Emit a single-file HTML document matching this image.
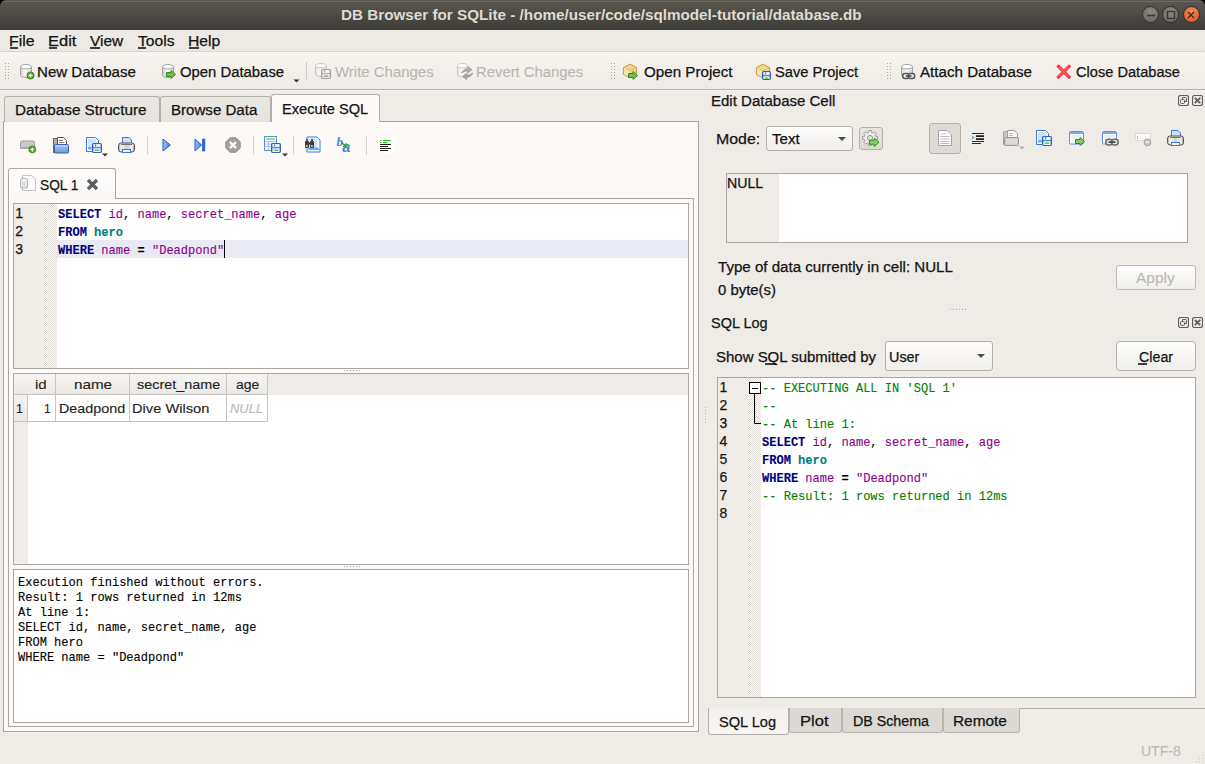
<!DOCTYPE html>
<html><head><meta charset="utf-8"><style>
html,body{margin:0;padding:0}
body{width:1205px;height:764px;overflow:hidden;position:relative;background:#efebe7;font-family:'Liberation Sans',sans-serif}
body>div,body>svg{position:absolute}
.t{white-space:pre;transform-origin:0 0;-webkit-text-stroke:0.25px currentColor}
.m{-webkit-text-stroke:0.2px currentColor}
u{text-decoration:underline;text-decoration-thickness:1.4px;text-underline-offset:1.5px}
</style></head><body>
<div style="left:0px;top:0px;width:1205px;height:12px;background:#000"></div><div style="left:0px;top:0px;width:1205px;height:30px;background:linear-gradient(#5b5850,#3d3c38);border-radius:6px 6px 0 0"></div><div style="left:3px;top:1px;width:1199px;height:1px;background:#6f6c63"></div><div style="left:1142.3px;top:6px;width:15px;height:15px;border-radius:50%;border:1px solid #2f2e2a;background:radial-gradient(circle at 50% 30%,#8b8982,#66645e)"></div><div style="left:1162.3px;top:6px;width:15px;height:15px;border-radius:50%;border:1px solid #2f2e2a;background:radial-gradient(circle at 50% 30%,#8b8982,#66645e)"></div><div style="left:1182.5px;top:6px;width:15px;height:15px;border-radius:50%;border:1px solid #2f2e2a;background:radial-gradient(circle at 50% 30%,#f58a5b,#e2511d)"></div><svg style="left:1143px;top:7px" width="16" height="16"><path d="M4 8.5h8" stroke="#3a3935" stroke-width="1.6"/></svg><svg style="left:1163px;top:7px" width="16" height="16"><rect x="4.5" y="4.5" width="7" height="7" fill="none" stroke="#3a3935" stroke-width="1.4"/></svg><svg style="left:1183px;top:7px" width="16" height="16"><path d="M5 5l6 6M11 5l-6 6" stroke="#3a2a1a" stroke-width="1.4"/></svg><div style="left:0px;top:30px;width:1205px;height:21px;background:#edeae6"></div><div style="left:0px;top:51px;width:1205px;height:1px;background:#d9d5d0"></div><div style="left:0px;top:52px;width:1205px;height:37px;background:linear-gradient(#f8f5f1,#eeebe6)"></div><div style="left:0px;top:89px;width:1205px;height:1px;background:#b6b3ae"></div><div style="left:0px;top:90px;width:1205px;height:1px;background:#f4f2ef"></div><div style="left:3px;top:121px;width:696px;height:611px;background:#fcf9f6;border:1px solid #a9a6a1;box-sizing:border-box"></div><div style="left:4px;top:96px;width:156px;height:26px;background:linear-gradient(#ebe8e4,#e6e3df);border:1px solid #b3b0ab;border-bottom:none;border-radius:3px 3px 0 0;box-sizing:border-box"></div><div style="left:160px;top:96px;width:111px;height:26px;background:linear-gradient(#ebe8e4,#e6e3df);border:1px solid #b3b0ab;border-bottom:none;border-radius:3px 3px 0 0;box-sizing:border-box"></div><div style="left:271px;top:94px;width:109px;height:28px;background:#fcf9f6;border:1px solid #b3b0ab;border-bottom:none;border-radius:3px 3px 0 0;box-sizing:border-box"></div><div style="left:8px;top:198px;width:686px;height:529px;border:1px solid #a9a6a1;box-sizing:border-box"></div><div style="left:8px;top:168px;width:108px;height:31px;background:linear-gradient(#fefefd,#faf8f6);border:1px solid #aaa7a2;border-bottom:none;border-radius:3px 3px 0 0;box-sizing:border-box"></div><div style="left:13px;top:203px;width:676px;height:166px;background:#fff;border:1px solid #a9a6a1;box-sizing:border-box"></div><div style="left:14px;top:204px;width:29px;height:164px;background:#efebe7"></div><div style="left:43px;top:204px;width:14px;height:164px;background-color:#fff;background-image:repeating-conic-gradient(#dedbd7 0 25%,#fff 0 50%);background-size:2px 2px"></div><div style="left:57px;top:240px;width:631px;height:18px;background:#e9e9f3"></div><div style="left:224px;top:240px;width:1px;height:18px;background:#000"></div><div style="left:13px;top:373px;width:676px;height:192px;background:#fff;border:1px solid #a9a6a1;box-sizing:border-box"></div><div style="left:14px;top:374px;width:674px;height:21px;background:#efebe7"></div><div style="left:14px;top:395px;width:14px;height:169px;background:#efebe7"></div><div style="left:14px;top:374px;width:254px;height:21px;background:linear-gradient(#f7f5f3,#ebe8e4)"></div><div style="left:14px;top:394px;width:254px;height:1px;background:#c6c3be"></div><div style="left:14px;top:421px;width:254px;height:1px;background:#c6c3be"></div><div style="left:55px;top:374px;width:1px;height:48px;background:#c9c6c1"></div><div style="left:129px;top:374px;width:1px;height:48px;background:#c9c6c1"></div><div style="left:226px;top:374px;width:1px;height:48px;background:#c9c6c1"></div><div style="left:267px;top:374px;width:1px;height:48px;background:#c9c6c1"></div><div style="left:27px;top:395px;width:1px;height:27px;background:#c9c6c1"></div><div style="left:14px;top:395px;width:13px;height:26px;background:linear-gradient(#f4f2ef,#ebe8e4)"></div><div style="left:13px;top:569px;width:676px;height:154px;background:#fff;border:1px solid #a9a6a1;box-sizing:border-box"></div><div style="left:344px;top:370px;width:18px;height:1px;background-image:repeating-linear-gradient(90deg,#a9a6a1 0 1px,transparent 1px 3px)"></div><div style="left:344px;top:566px;width:18px;height:1px;background-image:repeating-linear-gradient(90deg,#a9a6a1 0 1px,transparent 1px 3px)"></div><div style="left:766px;top:126px;width:87px;height:25px;background:linear-gradient(#fdfcfb,#f1efec);border:1px solid #b3b0ab;border-radius:3px;box-sizing:border-box"></div><svg style="left:836px;top:135px" width="12" height="8"><path d="M2 2h8l-4 4z" fill="#4a4a4a"/></svg><div style="left:859px;top:127px;width:24px;height:23px;background:linear-gradient(#e9e6e2,#dcd9d5);border:1px solid #b3b0ab;border-radius:3px;box-sizing:border-box"></div><div style="left:929px;top:123px;width:32px;height:31px;background:#dedad6;border:1px solid #b3b0ab;border-radius:3px;box-sizing:border-box"></div><div style="left:726px;top:173px;width:462px;height:70px;background:#fff;border:1px solid #a9a6a1;box-sizing:border-box"></div><div style="left:727px;top:174px;width:52px;height:68px;background:#efebe7"></div><div style="left:1116px;top:265px;width:80px;height:25px;background:linear-gradient(#fefefe,#f1efec);border:1px solid #bcb9b4;border-radius:3px;box-sizing:border-box"></div><div style="left:950px;top:309px;width:18px;height:1px;background-image:repeating-linear-gradient(90deg,#a9a6a1 0 1px,transparent 1px 3px)"></div><div style="left:951px;top:310px;width:18px;height:1px;background-image:repeating-linear-gradient(90deg,#fbfaf8 0 1px,transparent 1px 3px)"></div><div style="left:885px;top:341px;width:108px;height:30px;background:linear-gradient(#fdfcfb,#f1efec);border:1px solid #b3b0ab;border-radius:3px;box-sizing:border-box"></div><svg style="left:975px;top:352px" width="12" height="8"><path d="M2 2h8l-4 4z" fill="#4a4a4a"/></svg><div style="left:1116px;top:341px;width:80px;height:30px;background:linear-gradient(#fefefe,#f0eeeb);border:1px solid #b3b0ab;border-radius:4px;box-sizing:border-box"></div><div style="left:717px;top:377px;width:479px;height:321px;background:#fff;border:1px solid #a9a6a1;box-sizing:border-box"></div><div style="left:718px;top:378px;width:29px;height:319px;background:#efebe7"></div><div style="left:747px;top:378px;width:14px;height:319px;background-color:#fff;background-image:repeating-conic-gradient(#dedbd7 0 25%,#fff 0 50%);background-size:2px 2px"></div><svg style="left:748px;top:381px" width="14" height="46"><rect x="1.5" y="1.5" width="11" height="11" fill="#fff" stroke="#000"/><path d="M4 7.5h6" stroke="#000"/><path d="M6.5 13V42.5H13" fill="none" stroke="#000"/></svg><div style="left:788px;top:708px;width:417px;height:1px;background:#b3b0ab"></div><div style="left:708px;top:708px;width:81px;height:27px;background:linear-gradient(#f3f1ee,#f7f5f2);border:1px solid #b3b0ab;border-top:none;border-radius:0 0 3px 3px;box-sizing:border-box"></div><div style="left:789px;top:708px;width:53px;height:25px;background:#dcd9d5;border:1px solid #b8b5b0;border-top:none;border-radius:0 0 3px 3px;box-sizing:border-box"></div><div style="left:842px;top:708px;width:101px;height:25px;background:#dcd9d5;border:1px solid #b8b5b0;border-top:none;border-radius:0 0 3px 3px;box-sizing:border-box"></div><div style="left:943px;top:708px;width:77px;height:25px;background:#dcd9d5;border:1px solid #b8b5b0;border-top:none;border-radius:0 0 3px 3px;box-sizing:border-box"></div>
<svg style="left:5px;top:63px" width="5" height="18" viewBox="0 0 5 18"><rect x="0" y="0" width="1" height="1" fill="#aaa59f"/><rect x="0" y="3" width="1" height="1" fill="#aaa59f"/><rect x="0" y="6" width="1" height="1" fill="#aaa59f"/><rect x="0" y="9" width="1" height="1" fill="#aaa59f"/><rect x="0" y="12" width="1" height="1" fill="#aaa59f"/><rect x="0" y="15" width="1" height="1" fill="#aaa59f"/><rect x="3" y="0" width="1" height="1" fill="#aaa59f"/><rect x="3" y="3" width="1" height="1" fill="#aaa59f"/><rect x="3" y="6" width="1" height="1" fill="#aaa59f"/><rect x="3" y="9" width="1" height="1" fill="#aaa59f"/><rect x="3" y="12" width="1" height="1" fill="#aaa59f"/><rect x="3" y="15" width="1" height="1" fill="#aaa59f"/></svg><svg style="left:611px;top:63px" width="5" height="18" viewBox="0 0 5 18"><rect x="0" y="0" width="1" height="1" fill="#aaa59f"/><rect x="0" y="3" width="1" height="1" fill="#aaa59f"/><rect x="0" y="6" width="1" height="1" fill="#aaa59f"/><rect x="0" y="9" width="1" height="1" fill="#aaa59f"/><rect x="0" y="12" width="1" height="1" fill="#aaa59f"/><rect x="0" y="15" width="1" height="1" fill="#aaa59f"/><rect x="3" y="0" width="1" height="1" fill="#aaa59f"/><rect x="3" y="3" width="1" height="1" fill="#aaa59f"/><rect x="3" y="6" width="1" height="1" fill="#aaa59f"/><rect x="3" y="9" width="1" height="1" fill="#aaa59f"/><rect x="3" y="12" width="1" height="1" fill="#aaa59f"/><rect x="3" y="15" width="1" height="1" fill="#aaa59f"/></svg><svg style="left:887px;top:63px" width="5" height="18" viewBox="0 0 5 18"><rect x="0" y="0" width="1" height="1" fill="#aaa59f"/><rect x="0" y="3" width="1" height="1" fill="#aaa59f"/><rect x="0" y="6" width="1" height="1" fill="#aaa59f"/><rect x="0" y="9" width="1" height="1" fill="#aaa59f"/><rect x="0" y="12" width="1" height="1" fill="#aaa59f"/><rect x="0" y="15" width="1" height="1" fill="#aaa59f"/><rect x="3" y="0" width="1" height="1" fill="#aaa59f"/><rect x="3" y="3" width="1" height="1" fill="#aaa59f"/><rect x="3" y="6" width="1" height="1" fill="#aaa59f"/><rect x="3" y="9" width="1" height="1" fill="#aaa59f"/><rect x="3" y="12" width="1" height="1" fill="#aaa59f"/><rect x="3" y="15" width="1" height="1" fill="#aaa59f"/></svg><div style="left:306px;top:62px;width:1px;height:19px;background:#cfcbc6"></div><svg style="left:19px;top:63px" width="18" height="18" viewBox="0 0 18 18"><defs><linearGradient id="g1" x1="0" x2="1"><stop offset="0" stop-color="#d2d2d2"/><stop offset=".45" stop-color="#fbfbfb"/><stop offset="1" stop-color="#d2d2d2"/></linearGradient></defs><path d="M1.5 3.7V12.3A5.5 2.2 0 0 0 12.5 12.3V3.7" fill="url(#g1)" stroke="#a6a6a6"/><ellipse cx="7.0" cy="3.7" rx="5.5" ry="2.2" fill="#ffffff" stroke="#a6a6a6"/><circle cx="11.5" cy="12.5" r="3.6" fill="#4f9e2a" stroke="#2f7a12" stroke-width=".8"/><path d="M9.5 12.5h4M11.5 10.5v4" stroke="#fff" stroke-width="1.4"/></svg><svg style="left:161px;top:63px" width="18" height="18" viewBox="0 0 18 18"><defs><linearGradient id="g2" x1="0" x2="1"><stop offset="0" stop-color="#d2d2d2"/><stop offset=".45" stop-color="#fbfbfb"/><stop offset="1" stop-color="#d2d2d2"/></linearGradient></defs><path d="M1.5 3.7V12.3A5.5 2.2 0 0 0 12.5 12.3V3.7" fill="url(#g2)" stroke="#a6a6a6"/><ellipse cx="7.0" cy="3.7" rx="5.5" ry="2.2" fill="#ffffff" stroke="#a6a6a6"/><path d="M5.5 9.5H10.0V7.5L14.5 11.5L10.0 15.5V13.5H5.5Z" fill="#6cbf4a" stroke="#2e8b1e" stroke-linejoin="round"/></svg><svg style="left:292px;top:79px" width="8" height="5" viewBox="0 0 8 5"><path d="M1.5 0.5h6l-3 3z" fill="#333"/></svg><svg style="left:314px;top:63px" width="18" height="18" viewBox="0 0 18 18"><defs><linearGradient id="g3" x1="0" x2="1"><stop offset="0" stop-color="#e6e5e3"/><stop offset=".45" stop-color="#fafaf9"/><stop offset="1" stop-color="#e6e5e3"/></linearGradient></defs><path d="M1.5 2.7V11.3A5.5 2.2 0 0 0 12.5 11.3V2.7" fill="url(#g3)" stroke="#c9c7c4"/><ellipse cx="7.0" cy="2.7" rx="5.5" ry="2.2" fill="#ffffff" stroke="#c9c7c4"/><rect x="7.5" y="6.5" width="9" height="9" rx="0.8" fill="#b9b8b6" stroke="#9d9b98"/><rect x="8.5" y="7.2" width="7" height="2.6" fill="#fbfbfa"/><rect x="10" y="7.6" width="1.2" height="1.6" fill="#9d9b98"/><rect x="8.5" y="11.3" width="7" height="3.7" fill="#fbfbfa"/><rect x="9.6" y="12.4" width="4.8" height="1.6" fill="#a5a3a0"/></svg><svg style="left:456px;top:63px" width="18" height="18" viewBox="0 0 18 18"><defs><linearGradient id="g4" x1="0" x2="1"><stop offset="0" stop-color="#e6e5e3"/><stop offset=".45" stop-color="#fafaf9"/><stop offset="1" stop-color="#e6e5e3"/></linearGradient></defs><path d="M1.5 2.7V11.3A5.0 2.2 0 0 0 11.5 11.3V2.7" fill="url(#g4)" stroke="#c9c7c4"/><ellipse cx="6.5" cy="2.7" rx="5.0" ry="2.2" fill="#ffffff" stroke="#c9c7c4"/><path d="M5.5 10Q7.5 5.8 12 5.8V3.8L16 6.8L12 9.8V7.8Q9 7.8 5.5 10Z" fill="#b3b1ae" stroke="#9a9895" stroke-width=".7" stroke-linejoin="round"/><path d="M17 10Q14.5 14.5 10.5 14.5V16.5L6.5 13.5L10.5 10.5V12.5Q13.5 12.5 17 10Z" fill="#a9a7a4" stroke="#8f8d8a" stroke-width=".7" stroke-linejoin="round"/></svg><svg style="left:622px;top:63px" width="18" height="18" viewBox="0 0 18 18"><path d="M8 1.2L14.6 4.5V11.5L8 14.8L1.4 11.5V4.5Z" fill="#f4d58c" stroke="#c99a3c"/><path d="M1.8 4.7L8 8L14.2 4.7M8 8V14.5" fill="none" stroke="#d8b060" stroke-width=".8"/><path d="M2 5L8 8.2V14.2L2 11.2Z" fill="#f8e4b0"/><path d="M6.5 10.5H11.0V8.5L15.5 12.5L11.0 16.5V14.5H6.5Z" fill="#6cbf4a" stroke="#2e8b1e" stroke-linejoin="round"/></svg><svg style="left:755px;top:63px" width="18" height="18" viewBox="0 0 18 18"><path d="M8 1.2L14.6 4.5V11.5L8 14.8L1.4 11.5V4.5Z" fill="#f4d58c" stroke="#c99a3c"/><path d="M1.8 4.7L8 8L14.2 4.7M8 8V14.5" fill="none" stroke="#d8b060" stroke-width=".8"/><path d="M2 5L8 8.2V14.2L2 11.2Z" fill="#f8e4b0"/><rect x="7.5" y="8.5" width="8" height="8" rx="0.8" fill="#4f86d6" stroke="#2f63b8"/><rect x="8.5" y="9.2" width="6" height="2.6" fill="#ffffff"/><rect x="10" y="9.6" width="1.2" height="1.6" fill="#2f63b8"/><rect x="8.5" y="13.3" width="6" height="2.7" fill="#ffffff"/><rect x="9.6" y="14.4" width="3.8" height="1.6" fill="#7cc43a"/></svg><svg style="left:900px;top:63px" width="18" height="18" viewBox="0 0 18 18"><defs><linearGradient id="g5" x1="0" x2="1"><stop offset="0" stop-color="#d2d2d2"/><stop offset=".45" stop-color="#fbfbfb"/><stop offset="1" stop-color="#d2d2d2"/></linearGradient></defs><path d="M1.5 3.7V12.3A5.5 2.2 0 0 0 12.5 12.3V3.7" fill="url(#g5)" stroke="#a6a6a6"/><ellipse cx="7.0" cy="3.7" rx="5.5" ry="2.2" fill="#ffffff" stroke="#a6a6a6"/><rect x="2.8" y="10.5" width="6.4" height="5" rx="2.2" fill="#e9ecee" stroke="#555" stroke-width="1.5"/><rect x="8.3" y="10.5" width="6.4" height="5" rx="2.2" fill="#e9ecee" stroke="#555" stroke-width="1.5"/><path d="M6 13h5.5" stroke="#444" stroke-width="1.6"/></svg><svg style="left:1055px;top:63px" width="18" height="18" viewBox="0 0 18 18"><path d="M3.5 3.5L14 14M14 3.5L3.5 14" stroke="#ef3a47" stroke-width="3.2" stroke-linecap="square"/><path d="M4 4L13.5 13.5M13.5 4L4 13.5" stroke="#fb6a73" stroke-width="1"/></svg><svg style="left:19px;top:136px" width="20" height="20" viewBox="0 0 20 20"><rect x="1.5" y="5" width="14" height="7" rx="1.5" fill="#c9c9c9" stroke="#9c9c9c"/><rect x="1" y="11.5" width="15" height="1.5" fill="#a8a8a8"/><circle cx="13.3" cy="13.4" r="3.4" fill="#4f9e2a" stroke="#2f7a12" stroke-width=".8"/><path d="M11.3 13.4h4M13.3 11.4v4" stroke="#fff" stroke-width="1.4"/></svg><svg style="left:52px;top:137px" width="18" height="18" viewBox="0 0 18 18"><defs><linearGradient id="g6" x1="0" y1="0" x2="0" y2="1"><stop offset="0" stop-color="#a9c6ec"/><stop offset="1" stop-color="#6f9ad6"/></linearGradient></defs><rect x="1.5" y="1.5" width="4" height="14" fill="#b0b0b0" stroke="#666"/><path d="M5.5 0.5H11.5L14.5 3.5V9H5.5Z" fill="#fafafa" stroke="#555"/><path d="M7 3.5h4M7 5.5h5" stroke="#8a8a8a"/><rect x="2.5" y="7.5" width="14" height="8.5" rx="1" fill="url(#g6)" stroke="#2f62b1"/><rect x="3.5" y="8.5" width="12" height="1" fill="#c6dbf5"/></svg><svg style="left:86px;top:137px" width="20" height="20" viewBox="0 0 20 20"><path d="M0.5 0.5H9.5L12.5 3.5V14.5H0.5Z" fill="#fbfdff" stroke="#3f7bd6"/><rect x="2" y="2" width="8" height="9" fill="#cfe2fb"/><rect x="2" y="10" width="9" height="2.5" fill="#69b1f2"/><rect x="6.5" y="6.5" width="9" height="9" rx="0.8" fill="#4f86d6" stroke="#2f63b8"/><rect x="7.5" y="7.2" width="7" height="2.6" fill="#ffffff"/><rect x="9" y="7.6" width="1.2" height="1.6" fill="#2f63b8"/><rect x="7.5" y="11.3" width="7" height="3.7" fill="#ffffff"/><rect x="8.6" y="12.4" width="4.8" height="1.6" fill="#7cc43a"/></svg><svg style="left:101px;top:153px" width="8" height="5" viewBox="0 0 8 5"><path d="M1 0.5h6l-3 3z" fill="#333"/></svg><svg style="left:118px;top:137px" width="18" height="18" viewBox="0 0 18 18"><defs><linearGradient id="g7" x1="0" x2="1"><stop offset="0" stop-color="#9a9a9a"/><stop offset=".15" stop-color="#f4f4f4"/><stop offset=".5" stop-color="#cfcfcf"/><stop offset=".85" stop-color="#f4f4f4"/><stop offset="1" stop-color="#8a8a8a"/></linearGradient></defs><path d="M4.5 0.5H11L13.5 3V8H4.5Z" fill="#cfe2fb" stroke="#3b78d4"/><rect x="0.5" y="6" width="16" height="9" rx="2.5" fill="url(#g7)" stroke="#555"/><path d="M3 7.5h11" stroke="#777" stroke-width="1"/><rect x="4.5" y="12.5" width="8" height="3" fill="#eef4fc" stroke="#3b78d4"/></svg><div style="left:147px;top:136px;width:1px;height:19px;background:#d4d0cb"></div><div style="left:253px;top:136px;width:1px;height:19px;background:#d4d0cb"></div><div style="left:293px;top:136px;width:1px;height:19px;background:#d4d0cb"></div><div style="left:366px;top:136px;width:1px;height:19px;background:#d4d0cb"></div><svg style="left:162px;top:138px" width="10" height="14" viewBox="0 0 10 14"><defs><linearGradient id="g8" x1="0" x2="1"><stop offset="0" stop-color="#9cc3f2"/><stop offset="1" stop-color="#3d7ee0"/></linearGradient></defs><path d="M1 1L8.3 7L1 13Z" fill="url(#g8)" stroke="#1f5dc4" stroke-width="1" stroke-linejoin="round"/></svg><svg style="left:194px;top:138px" width="13" height="14" viewBox="0 0 13 14"><defs><linearGradient id="g9" x1="0" x2="1"><stop offset="0" stop-color="#9cc3f2"/><stop offset="1" stop-color="#3d7ee0"/></linearGradient></defs><path d="M1 1L7.6 7L1 13Z" fill="url(#g9)" stroke="#1f5dc4" stroke-linejoin="round"/><rect x="8.3" y="1" width="2.6" height="12" fill="#2a66cc" stroke="#1f5dc4" stroke-width=".6"/></svg><svg style="left:225px;top:137px" width="16" height="16" viewBox="0 0 16 16"><path d="M5 0.8H11L15.2 5V11L11 15.2H5L0.8 11V5Z" fill="#a3a3a3" stroke="#8a8a8a"/><path d="M5 5L11 11M11 5L5 11" stroke="#fff" stroke-width="2.2"/></svg><svg style="left:264px;top:136px" width="22" height="22" viewBox="0 0 22 22"><rect x="0.5" y="0.5" width="12" height="14" fill="#f3f7fd" stroke="#5b8fd6"/><path d="M2 3h9" stroke="#6cc04a" stroke-width="1.2"/><path d="M1 5.5h11M1 8h11M1 10.5h11M4.5 5v9M8 5v9" stroke="#9db9e3" stroke-width=".8"/><rect x="7.5" y="7.5" width="9" height="9" rx="0.8" fill="#4f86d6" stroke="#2f63b8"/><rect x="8.5" y="8.2" width="7" height="2.6" fill="#ffffff"/><rect x="10" y="8.6" width="1.2" height="1.6" fill="#2f63b8"/><rect x="8.5" y="12.3" width="7" height="3.7" fill="#ffffff"/><rect x="9.6" y="13.4" width="4.8" height="1.6" fill="#7cc43a"/></svg><svg style="left:281px;top:153px" width="8" height="5" viewBox="0 0 8 5"><path d="M1 0.5h6l-3 3z" fill="#333"/></svg><svg style="left:304px;top:136px" width="18" height="18" viewBox="0 0 18 18"><path d="M3.0 1.0H13.0L16.0 4.0V16.0H3.0Z" fill="#fbfdff" stroke="#3f7bd6"/><rect x="4.5" y="2.5" width="9" height="10" fill="#cfe2fb"/><rect x="4.5" y="11.5" width="10" height="2.5" fill="#69b1f2"/><rect x="5" y="12.5" width="10" height="1.6" fill="#6aa9ef"/><rect x="1" y="5" width="4" height="7" rx="1" fill="#3a3a3a"/><rect x="6" y="5" width="4" height="7" rx="1" fill="#3a3a3a"/><rect x="4" y="6.5" width="3" height="2" fill="#3a3a3a"/><rect x="2" y="3" width="2" height="2.5" fill="#555"/><rect x="7" y="3" width="2" height="2.5" fill="#555"/><rect x="1.8" y="9" width="2" height="2" fill="#bbb"/><rect x="6.8" y="9" width="2" height="2" fill="#bbb"/></svg><svg style="left:335px;top:135px" width="22" height="20" viewBox="0 0 22 20"><text x="1.5" y="10.5" font-family="Liberation Serif" font-style="italic" font-weight="bold" font-size="13" fill="#3f86e6">b</text><text x="7.2" y="17.3" font-family="Liberation Sans" font-style="italic" font-weight="bold" font-size="14.5" fill="#3f86e6">a</text><path d="M6.5 7.5L10.5 11" stroke="#3a9a2a" stroke-width="1.5"/><path d="M8 11.5H11.2V8.3" fill="none" stroke="#3a9a2a" stroke-width="1.3"/></svg><svg style="left:378px;top:137px" width="16" height="16" viewBox="0 0 16 16"><rect x="0" y="0" width="16" height="16" fill="#fff"/><path d="M2 3.5h1.5M5 3.5h8M2 5.5h1.5M5 5.5h4" stroke="#1fc21f" stroke-width="1"/><path d="M2 7.5h11M2 9.5h8M2 11.5h11M2 13.5h8" stroke="#1a1a1a" stroke-width="1"/></svg><svg style="left:19px;top:174px" width="18" height="18" viewBox="0 0 18 18"><path d="M3.5 1.5H13L16.5 5V16.5H3.5Z" fill="#fbfbfb" stroke="#c4c4c4"/><rect x="1.5" y="4.5" width="7" height="9.5" rx="2" fill="#f0f0f0" stroke="#b5b5b5" stroke-width="1.1"/><path d="M3.8 7.5v5M5.8 7.5v5" stroke="#cdcdcd"/></svg><svg style="left:85px;top:177px" width="15" height="15" viewBox="0 0 15 15"><path d="M3 3L12 12M12 3L3 12" stroke="#5c5c5c" stroke-width="3.2"/></svg><svg style="left:862px;top:130px" width="20" height="18" viewBox="0 0 20 18"><path d="M13.35 6.35L15.49 6.71L15.49 9.29L13.35 9.65L12.95 10.61L14.21 12.39L12.39 14.21L10.61 12.95L9.65 13.35L9.29 15.49L6.71 15.49L6.35 13.35L5.39 12.95L3.61 14.21L1.79 12.39L3.05 10.61L2.65 9.65L0.51 9.29L0.51 6.71L2.65 6.35L3.05 5.39L1.79 3.61L3.61 1.79L5.39 3.05L6.35 2.65L6.71 0.51L9.29 0.51L9.65 2.65L10.61 3.05L12.39 1.79L14.21 3.61L12.95 5.39Z" fill="#eeeeee" stroke="#9b9b9b" stroke-width="1"/><circle cx="8" cy="8" r="2.6" fill="#dcdcdc" stroke="#9a9a9a" stroke-width="1"/><path d="M7.5 10.25H12.25V8.0L17.0 12.25L12.25 16.5V14.25H7.5Z" fill="#86d068" stroke="#2f8f1f" stroke-linejoin="round"/></svg><svg style="left:937px;top:129px" width="16" height="18" viewBox="0 0 16 18"><path d="M1.5 1.5H10L14.5 6V16.5H1.5Z" fill="#fff" stroke="#a3a3a3"/><path d="M3.5 5h5M3.5 7.5h9M3.5 10h9M3.5 12.5h9M3.5 14.5h9" stroke="#b5b5b5" stroke-width=".9"/></svg><svg style="left:970px;top:131px" width="16" height="16" viewBox="0 0 16 16"><path d="M2 2.5h12M2 10.5h12M2 12.5h9" stroke="#2a2a2a" stroke-width="1"/><path d="M6 5.2h8M6 8.2h8" stroke="#1e1e1e" stroke-width="1.7"/><path d="M1 4.3L5 6.6L1 8.9L2.3 6.6Z" fill="#6aa6f2"/></svg><svg style="left:1002px;top:129px" width="18" height="18" viewBox="0 0 18 18"><rect x="1.5" y="2.5" width="4" height="13.5" rx="1" fill="#c9c8c6" stroke="#a09e9b"/><path d="M5.5 1.5H12.5L15.5 4.5V9H5.5Z" fill="#f6f6f5" stroke="#a09e9b"/><path d="M7 4.5h4M7 6.5h4" stroke="#c4c3c1"/><rect x="2.5" y="8.5" width="14" height="8" rx="1" fill="#cfcecc" stroke="#9c9a97"/><rect x="4" y="10" width="11" height="5" fill="#dddcda"/></svg><svg style="left:1018px;top:146px" width="8" height="5" viewBox="0 0 8 5"><path d="M1 0.5h6l-3 3z" fill="#b4b1ac"/></svg><svg style="left:1036px;top:130px" width="20" height="20" viewBox="0 0 20 20"><path d="M0.5 0.5H9.5L12.5 3.5V14.5H0.5Z" fill="#fbfdff" stroke="#3f7bd6"/><rect x="2" y="2" width="8" height="9" fill="#cfe2fb"/><rect x="2" y="10" width="9" height="2.5" fill="#69b1f2"/><rect x="6.5" y="6.5" width="9" height="9" rx="0.8" fill="#4f86d6" stroke="#2f63b8"/><rect x="7.5" y="7.2" width="7" height="2.6" fill="#ffffff"/><rect x="9" y="7.6" width="1.2" height="1.6" fill="#2f63b8"/><rect x="7.5" y="11.3" width="7" height="3.7" fill="#ffffff"/><rect x="8.6" y="12.4" width="4.8" height="1.6" fill="#7cc43a"/></svg><svg style="left:1069px;top:131px" width="18" height="17" viewBox="0 0 18 17"><defs><linearGradient id="g10" x1="0" y1="0" x2="0" y2="1"><stop offset="0" stop-color="#e6ebf3"/><stop offset="1" stop-color="#fafbfd"/></linearGradient></defs><rect x="0.5" y="0.5" width="14" height="12.5" rx="1.2" fill="#fff" stroke="#5d90da"/><rect x="1" y="1" width="13" height="2" fill="#7ea9e6"/><rect x="2" y="4" width="11" height="7.5" fill="url(#g10)"/><path d="M6.5 8.5H11.0V6.5L15.5 10.5L11.0 14.5V12.5H6.5Z" fill="#8acb6e" stroke="#2b8a1c" stroke-linejoin="round"/></svg><svg style="left:1102px;top:131px" width="18" height="17" viewBox="0 0 18 17"><defs><linearGradient id="g10" x1="0" y1="0" x2="0" y2="1"><stop offset="0" stop-color="#e6ebf3"/><stop offset="1" stop-color="#fafbfd"/></linearGradient></defs><rect x="0.5" y="0.5" width="14" height="12.5" rx="1.2" fill="#fff" stroke="#5d90da"/><rect x="1" y="1" width="13" height="2" fill="#7ea9e6"/><rect x="2" y="4" width="11" height="7.5" fill="url(#g10)"/><rect x="3.8" y="8.3" width="6.6" height="5.6" rx="2.6" fill="#e3e6ea" stroke="#6b6b6b" stroke-width="1.5"/><rect x="9.6" y="8.3" width="6.6" height="5.6" rx="2.6" fill="#e3e6ea" stroke="#6b6b6b" stroke-width="1.5"/><path d="M6.5 11.1h7" stroke="#333" stroke-width="1.5"/></svg><svg style="left:1134px;top:131px" width="20" height="18" viewBox="0 0 20 18"><rect x="1.5" y="2.5" width="15" height="7" fill="#fcfaf7" stroke="#dcdad6"/><path d="M2.5 3.5v5" stroke="#fff"/><path d="M3.5 5v3" stroke="#b9b9b9"/><circle cx="13.5" cy="11.3" r="3.4" fill="#c4c4c4" stroke="#9a9a9a" stroke-width=".9"/><path d="M11.5 11.3h4" stroke="#f2f2f2" stroke-width="1.3"/></svg><svg style="left:1167px;top:130px" width="18" height="18" viewBox="0 0 18 18"><defs><linearGradient id="g7" x1="0" x2="1"><stop offset="0" stop-color="#9a9a9a"/><stop offset=".15" stop-color="#f4f4f4"/><stop offset=".5" stop-color="#cfcfcf"/><stop offset=".85" stop-color="#f4f4f4"/><stop offset="1" stop-color="#8a8a8a"/></linearGradient></defs><path d="M4.5 0.5H11L13.5 3V8H4.5Z" fill="#cfe2fb" stroke="#3b78d4"/><rect x="0.5" y="6" width="16" height="9" rx="2.5" fill="url(#g7)" stroke="#555"/><path d="M3 7.5h11" stroke="#777" stroke-width="1"/><rect x="4.5" y="12.5" width="8" height="3" fill="#eef4fc" stroke="#3b78d4"/></svg><svg style="left:1178px;top:95px" width="11" height="11" viewBox="0 0 11 11"><rect x="0.5" y="0.5" width="10" height="10" rx="2" fill="none" stroke="#5f5e5a" stroke-width="1.2"/><rect x="2.5" y="4.5" width="4" height="4" rx="1" fill="none" stroke="#5f5e5a" stroke-width="1"/><path d="M4.5 4V2.5H7.5Q8.5 2.5 8.5 3.5V6.5H7" fill="none" stroke="#5f5e5a" stroke-width="1"/></svg><svg style="left:1192px;top:95px" width="11" height="11" viewBox="0 0 11 11"><rect x="0.5" y="0.5" width="10" height="10" rx="2" fill="none" stroke="#5f5e5a" stroke-width="1.2"/><path d="M2.8 2.8L8.2 8.2M8.2 2.8L2.8 8.2" stroke="#5f5e5a" stroke-width="1.8"/></svg><svg style="left:1178px;top:317px" width="11" height="11" viewBox="0 0 11 11"><rect x="0.5" y="0.5" width="10" height="10" rx="2" fill="none" stroke="#5f5e5a" stroke-width="1.2"/><rect x="2.5" y="4.5" width="4" height="4" rx="1" fill="none" stroke="#5f5e5a" stroke-width="1"/><path d="M4.5 4V2.5H7.5Q8.5 2.5 8.5 3.5V6.5H7" fill="none" stroke="#5f5e5a" stroke-width="1"/></svg><svg style="left:1192px;top:317px" width="11" height="11" viewBox="0 0 11 11"><rect x="0.5" y="0.5" width="10" height="10" rx="2" fill="none" stroke="#5f5e5a" stroke-width="1.2"/><path d="M2.8 2.8L8.2 8.2M8.2 2.8L2.8 8.2" stroke="#5f5e5a" stroke-width="1.8"/></svg><svg style="left:1193px;top:752px" width="12" height="12" viewBox="0 0 12 12"><rect x="9" y="3" width="1" height="1" fill="#c4c0ba"/><rect x="6" y="6" width="1" height="1" fill="#c4c0ba"/><rect x="9" y="6" width="1" height="1" fill="#c4c0ba"/><rect x="3" y="9" width="1" height="1" fill="#c4c0ba"/><rect x="6" y="9" width="1" height="1" fill="#c4c0ba"/><rect x="9" y="9" width="1" height="1" fill="#c4c0ba"/></svg><svg style="left:704px;top:407px" width="3" height="16" viewBox="0 0 3 16"><rect x="1" y="0" width="1" height="1" fill="#b5b1ab"/><rect x="1" y="3" width="1" height="1" fill="#b5b1ab"/><rect x="1" y="6" width="1" height="1" fill="#b5b1ab"/><rect x="1" y="9" width="1" height="1" fill="#b5b1ab"/><rect x="1" y="12" width="1" height="1" fill="#b5b1ab"/><rect x="1" y="15" width="1" height="1" fill="#b5b1ab"/></svg>
<div class="t" style="left:341.21px;top:8.35px;font:normal bold 14px/14px 'Liberation Sans';color:#dfdbd2;transform:scaleX(1.0883);-webkit-text-stroke:0">DB Browser for SQLite - /home/user/code/sqlmodel-tutorial/database.db</div><div class="t" style="left:9.37px;top:33.85px;font:normal normal 14px/14px 'Liberation Sans';color:#141414;transform:scaleX(1.1333);">File</div><div class="t" style="left:47.52px;top:33.85px;font:normal normal 14px/14px 'Liberation Sans';color:#141414;transform:scaleX(1.1783);">Edit</div><div class="t" style="left:90.00px;top:33.85px;font:normal normal 14px/14px 'Liberation Sans';color:#141414;transform:scaleX(1.1000);">View</div><div class="t" style="left:137.80px;top:33.85px;font:normal normal 14px/14px 'Liberation Sans';color:#141414;transform:scaleX(1.1152);">Tools</div><div class="t" style="left:187.88px;top:33.85px;font:normal normal 14px/14px 'Liberation Sans';color:#141414;transform:scaleX(1.1214);">Help</div><div class="t" style="left:36.92px;top:65.15px;font:normal normal 14px/14px 'Liberation Sans';color:#141414;transform:scaleX(1.0769);">New Database</div><div class="t" style="left:180.00px;top:65.15px;font:normal normal 14px/14px 'Liberation Sans';color:#141414;transform:scaleX(1.0612);">Open Database</div><div class="t" style="left:335.00px;top:65.15px;font:normal normal 14px/14px 'Liberation Sans';color:#b8b5b0;transform:scaleX(1.0685);-webkit-text-stroke:0.1px currentColor">Write Changes</div><div class="t" style="left:476.24px;top:65.15px;font:normal normal 14px/14px 'Liberation Sans';color:#b8b5b0;transform:scaleX(1.0600);-webkit-text-stroke:0.1px currentColor">Revert Changes</div><div class="t" style="left:643.60px;top:65.15px;font:normal normal 14px/14px 'Liberation Sans';color:#141414;transform:scaleX(1.0829);">Open Project</div><div class="t" style="left:775.15px;top:65.15px;font:normal normal 14px/14px 'Liberation Sans';color:#141414;transform:scaleX(1.0468);">Save Project</div><div class="t" style="left:919.60px;top:65.15px;font:normal normal 14px/14px 'Liberation Sans';color:#141414;transform:scaleX(1.0816);">Attach Database</div><div class="t" style="left:1075.50px;top:65.15px;font:normal normal 14px/14px 'Liberation Sans';color:#141414;transform:scaleX(1.0434);">Close Database</div><div class="t" style="left:14.71px;top:102.75px;font:normal normal 14px/14px 'Liberation Sans';color:#141414;transform:scaleX(1.0908);">Database Structure</div><div class="t" style="left:170.82px;top:103.05px;font:normal normal 14px/14px 'Liberation Sans';color:#141414;transform:scaleX(1.0772);">Browse Data</div><div class="t" style="left:281.66px;top:102.35px;font:normal normal 14px/14px 'Liberation Sans';color:#141414;transform:scaleX(1.0444);">Execute SQL</div><div class="t" style="left:39.52px;top:177.85px;font:normal normal 14px/14px 'Liberation Sans';color:#141414;transform:scaleX(0.9789);">SQL 1</div><div class="t" style="left:711.43px;top:93.85px;font:normal normal 14px/14px 'Liberation Sans';color:#141414;transform:scaleX(1.0728);">Edit Database Cell</div><div class="t" style="left:716.16px;top:132.25px;font:normal normal 14px/14px 'Liberation Sans';color:#141414;transform:scaleX(1.1351);">Mode:</div><div class="t" style="left:771.80px;top:132.25px;font:normal normal 14px/14px 'Liberation Sans';color:#141414;transform:scaleX(1.0808);">Text</div><div class="t" style="left:726.59px;top:175.95px;font:normal normal 14px/14px 'Liberation Sans';color:#141414;transform:scaleX(1.0114);">NULL</div><div class="t" style="left:718.00px;top:260.05px;font:normal normal 14px/14px 'Liberation Sans';color:#141414;transform:scaleX(1.0780);">Type of data currently in cell: NULL</div><div class="t" style="left:718.00px;top:282.95px;font:normal normal 14px/14px 'Liberation Sans';color:#141414;transform:scaleX(1.0630);">0 byte(s)</div><div class="t" style="left:1136.40px;top:270.95px;font:normal normal 14px/14px 'Liberation Sans';color:#bbb8b3;transform:scaleX(1.1057);-webkit-text-stroke:0.1px currentColor">Apply</div><div class="t" style="left:711.47px;top:316.05px;font:normal normal 14px/14px 'Liberation Sans';color:#141414;transform:scaleX(1.0321);">SQL Log</div><div class="t" style="left:716.33px;top:349.65px;font:normal normal 14px/14px 'Liberation Sans';color:#141414;transform:scaleX(1.0698);">Show SQL submitted by</div><div class="t" style="left:889.47px;top:349.65px;font:normal normal 14px/14px 'Liberation Sans';color:#141414;transform:scaleX(1.0276);">User</div><div class="t" style="left:1138.70px;top:349.75px;font:normal normal 14px/14px 'Liberation Sans';color:#141414;transform:scaleX(1.0176);">Clear</div><div class="t" style="left:719.16px;top:714.85px;font:normal normal 14px/14px 'Liberation Sans';color:#141414;transform:scaleX(1.0415);">SQL Log</div><div class="t" style="left:799.82px;top:713.95px;font:normal normal 14px/14px 'Liberation Sans';color:#141414;transform:scaleX(1.1826);">Plot</div><div class="t" style="left:852.68px;top:713.85px;font:normal normal 14px/14px 'Liberation Sans';color:#141414;transform:scaleX(1.0176);">DB Schema</div><div class="t" style="left:953.40px;top:713.85px;font:normal normal 14px/14px 'Liberation Sans';color:#141414;transform:scaleX(1.1000);">Remote</div><div class="t" style="left:1141.00px;top:743.65px;font:normal normal 14px/14px 'Liberation Sans';color:#bbb8b3;transform:scaleX(1.0000);-webkit-text-stroke:0.1px currentColor">UTF-8</div><div class="t" style="left:35.24px;top:377.80px;font:normal normal 13px/13px 'Liberation Sans';color:#1e1e1e;transform:scaleX(1.1556);-webkit-text-stroke:0.12px currentColor">id</div><div class="t" style="left:73.53px;top:377.80px;font:normal normal 13px/13px 'Liberation Sans';color:#1e1e1e;transform:scaleX(1.1710);-webkit-text-stroke:0.12px currentColor">name</div><div class="t" style="left:136.70px;top:377.80px;font:normal normal 13px/13px 'Liberation Sans';color:#1e1e1e;transform:scaleX(1.1080);-webkit-text-stroke:0.12px currentColor">secret_name</div><div class="t" style="left:235.50px;top:377.80px;font:normal normal 13px/13px 'Liberation Sans';color:#1e1e1e;transform:scaleX(1.0773);-webkit-text-stroke:0.12px currentColor">age</div><div class="t" style="left:16.23px;top:401.60px;font:normal normal 13px/13px 'Liberation Sans';color:#1e1e1e;transform:scaleX(0.9667);-webkit-text-stroke:0.12px currentColor">1</div><div class="t" style="left:43.58px;top:401.60px;font:normal normal 13px/13px 'Liberation Sans';color:#1e1e1e;transform:scaleX(0.9167);-webkit-text-stroke:0.12px currentColor">1</div><div class="t" style="left:58.50px;top:401.60px;font:normal normal 13px/13px 'Liberation Sans';color:#1e1e1e;transform:scaleX(1.1034);-webkit-text-stroke:0.12px currentColor">Deadpond</div><div class="t" style="left:132.27px;top:401.60px;font:normal normal 13px/13px 'Liberation Sans';color:#1e1e1e;transform:scaleX(1.1269);-webkit-text-stroke:0.12px currentColor">Dive Wilson</div><div class="t" style="left:230.20px;top:401.60px;font:italic normal 13px/13px 'Liberation Sans';color:#bdbab6;transform:scaleX(0.9970);-webkit-text-stroke:0.12px currentColor">NULL</div><div style="left:10.3px;top:47px;width:8.0px;height:2px;background:#111;opacity:.8"></div><div style="left:48.5px;top:47px;width:8.3px;height:2px;background:#111;opacity:.8"></div><div style="left:90.0px;top:47px;width:9.8px;height:2px;background:#111;opacity:.8"></div><div style="left:137.8px;top:47px;width:8.4px;height:2px;background:#111;opacity:.8"></div><div style="left:189.2px;top:47px;width:9.4px;height:2px;background:#111;opacity:.8"></div><div style="left:764.7px;top:363px;width:11.3px;height:2px;background:#111;opacity:.8"></div><div style="left:1138.0px;top:363px;width:9.0px;height:2px;background:#111;opacity:.8"></div>
<div style="font-family:'Liberation Mono';font-size:12.8px;white-space:pre;position:absolute;transform-origin:0 0;transform:scaleX(0.9406);-webkit-text-stroke:0.12px currentColor;left:58.2px;top:208.89px;line-height:12.8px;color:#000"><span style="color:#000080;font-weight:bold">SELECT</span> <span style="color:#8b008b">id</span>, <span style="color:#8b008b">name</span>, <span style="color:#8b008b">secret_name</span>, <span style="color:#8b008b">age</span></div><div style="font-family:'Liberation Mono';font-size:12.8px;white-space:pre;position:absolute;transform-origin:0 0;transform:scaleX(0.9406);-webkit-text-stroke:0.12px currentColor;left:58.2px;top:226.89px;line-height:12.8px;color:#000"><span style="color:#000080;font-weight:bold">FROM</span> <span style="color:#008080;font-weight:bold">hero</span></div><div style="font-family:'Liberation Mono';font-size:12.8px;white-space:pre;position:absolute;transform-origin:0 0;transform:scaleX(0.9406);-webkit-text-stroke:0.12px currentColor;left:58.2px;top:244.89px;line-height:12.8px;color:#000"><span style="color:#000080;font-weight:bold">WHERE</span> <span style="color:#8b008b">name</span> <b>=</b> <span style="color:#8b008b">"Deadpond"</span></div><div style="font-family:'Liberation Mono';font-size:12.8px;white-space:pre;position:absolute;transform-origin:0 0;transform:scaleX(0.9406);-webkit-text-stroke:0.12px currentColor;left:18.2px;top:576.69px;line-height:12.8px;color:#000">Execution finished without errors.</div><div style="font-family:'Liberation Mono';font-size:12.8px;white-space:pre;position:absolute;transform-origin:0 0;transform:scaleX(0.9406);-webkit-text-stroke:0.12px currentColor;left:18.2px;top:591.71px;line-height:12.8px;color:#000">Result: 1 rows returned in 12ms</div><div style="font-family:'Liberation Mono';font-size:12.8px;white-space:pre;position:absolute;transform-origin:0 0;transform:scaleX(0.9406);-webkit-text-stroke:0.12px currentColor;left:18.2px;top:606.73px;line-height:12.8px;color:#000">At line 1:</div><div style="font-family:'Liberation Mono';font-size:12.8px;white-space:pre;position:absolute;transform-origin:0 0;transform:scaleX(0.9406);-webkit-text-stroke:0.12px currentColor;left:18.2px;top:621.75px;line-height:12.8px;color:#000">SELECT id, name, secret_name, age</div><div style="font-family:'Liberation Mono';font-size:12.8px;white-space:pre;position:absolute;transform-origin:0 0;transform:scaleX(0.9406);-webkit-text-stroke:0.12px currentColor;left:18.2px;top:636.77px;line-height:12.8px;color:#000">FROM hero</div><div style="font-family:'Liberation Mono';font-size:12.8px;white-space:pre;position:absolute;transform-origin:0 0;transform:scaleX(0.9406);-webkit-text-stroke:0.12px currentColor;left:18.2px;top:651.79px;line-height:12.8px;color:#000">WHERE name = "Deadpond"</div><div style="font-family:'Liberation Mono';font-size:12.8px;white-space:pre;position:absolute;transform-origin:0 0;transform:scaleX(0.9406);-webkit-text-stroke:0.12px currentColor;left:762.2px;top:382.89px;line-height:12.8px;color:#000"><span style="color:#008000">-- EXECUTING ALL IN 'SQL 1'</span></div><div style="font-family:'Liberation Mono';font-size:12.8px;white-space:pre;position:absolute;transform-origin:0 0;transform:scaleX(0.9406);-webkit-text-stroke:0.12px currentColor;left:762.2px;top:400.89px;line-height:12.8px;color:#000"><span style="color:#008000">--</span></div><div style="font-family:'Liberation Mono';font-size:12.8px;white-space:pre;position:absolute;transform-origin:0 0;transform:scaleX(0.9406);-webkit-text-stroke:0.12px currentColor;left:762.2px;top:418.89px;line-height:12.8px;color:#000"><span style="color:#008000">-- At line 1:</span></div><div style="font-family:'Liberation Mono';font-size:12.8px;white-space:pre;position:absolute;transform-origin:0 0;transform:scaleX(0.9406);-webkit-text-stroke:0.12px currentColor;left:762.2px;top:436.89px;line-height:12.8px;color:#000"><span style="color:#000080;font-weight:bold">SELECT</span> <span style="color:#8b008b">id</span>, <span style="color:#8b008b">name</span>, <span style="color:#8b008b">secret_name</span>, <span style="color:#8b008b">age</span></div><div style="font-family:'Liberation Mono';font-size:12.8px;white-space:pre;position:absolute;transform-origin:0 0;transform:scaleX(0.9406);-webkit-text-stroke:0.12px currentColor;left:762.2px;top:454.89px;line-height:12.8px;color:#000"><span style="color:#000080;font-weight:bold">FROM</span> <span style="color:#008080;font-weight:bold">hero</span></div><div style="font-family:'Liberation Mono';font-size:12.8px;white-space:pre;position:absolute;transform-origin:0 0;transform:scaleX(0.9406);-webkit-text-stroke:0.12px currentColor;left:762.2px;top:472.89px;line-height:12.8px;color:#000"><span style="color:#000080;font-weight:bold">WHERE</span> <span style="color:#8b008b">name</span> <b>=</b> <span style="color:#8b008b">"Deadpond"</span></div><div style="font-family:'Liberation Mono';font-size:12.8px;white-space:pre;position:absolute;transform-origin:0 0;transform:scaleX(0.9406);-webkit-text-stroke:0.12px currentColor;left:762.2px;top:490.89px;line-height:12.8px;color:#000"><span style="color:#008000">-- Result: 1 rows returned in 12ms</span></div><div style="font-family:'Liberation Mono';font-size:12.8px;white-space:pre;position:absolute;transform-origin:0 0;transform:scaleX(0.9406);-webkit-text-stroke:0.12px currentColor;left:762.2px;top:508.89px;line-height:12.8px;color:#000"></div><div class="t" style="left:15.2px;top:205.85px;font:14px/14px 'Liberation Sans';color:#141414">1</div><div class="t" style="left:15.2px;top:223.85px;font:14px/14px 'Liberation Sans';color:#141414">2</div><div class="t" style="left:15.2px;top:241.85px;font:14px/14px 'Liberation Sans';color:#141414">3</div><div class="t" style="left:719.6px;top:379.85px;font:14px/14px 'Liberation Sans';color:#141414">1</div><div class="t" style="left:719.6px;top:397.85px;font:14px/14px 'Liberation Sans';color:#141414">2</div><div class="t" style="left:719.6px;top:415.85px;font:14px/14px 'Liberation Sans';color:#141414">3</div><div class="t" style="left:719.6px;top:433.85px;font:14px/14px 'Liberation Sans';color:#141414">4</div><div class="t" style="left:719.6px;top:451.85px;font:14px/14px 'Liberation Sans';color:#141414">5</div><div class="t" style="left:719.6px;top:469.85px;font:14px/14px 'Liberation Sans';color:#141414">6</div><div class="t" style="left:719.6px;top:487.85px;font:14px/14px 'Liberation Sans';color:#141414">7</div><div class="t" style="left:719.6px;top:505.85px;font:14px/14px 'Liberation Sans';color:#141414">8</div>
</body></html>
